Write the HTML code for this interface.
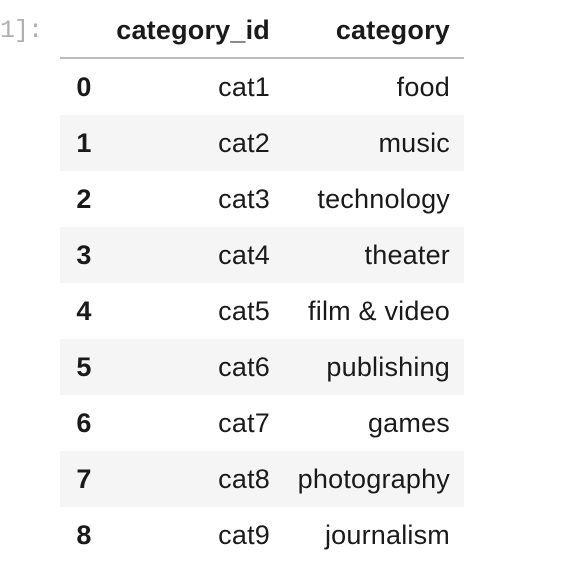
<!DOCTYPE html>
<html><head><style>
body{margin:0;width:574px;height:578px;background:#fff;position:relative;overflow:hidden;font-family:"Liberation Sans",sans-serif;color:#1a1a1a}
.p{position:absolute;left:0;top:16px;font-family:"Liberation Mono",monospace;font-size:25px;color:#b0b0b0;letter-spacing:-1px}
.hl{position:absolute;left:60px;top:57px;width:404px;height:2px;background:#bdbdbd}
.r{position:absolute;left:60px;width:404px;height:56px}
.g{background:#f5f5f5}
.t{position:absolute;font-size:27px;line-height:57px;white-space:nowrap;letter-spacing:0.2px}
.i{left:14px;font-weight:bold;width:20px;text-align:center}
.a{right:194px;text-align:right}
.b{right:14px;text-align:right}
.h{font-weight:bold}
</style></head><body>
<div class="p">1]:</div>
<div class="r" style="top:2px"><span class="t a h">category_id</span><span class="t b h">category</span></div>
<div class="hl"></div>
<div class="r" style="top:59px"><span class="t i">0</span><span class="t a">cat1</span><span class="t b">food</span></div>
<div class="r g" style="top:115px"><span class="t i">1</span><span class="t a">cat2</span><span class="t b">music</span></div>
<div class="r" style="top:171px"><span class="t i">2</span><span class="t a">cat3</span><span class="t b">technology</span></div>
<div class="r g" style="top:227px"><span class="t i">3</span><span class="t a">cat4</span><span class="t b">theater</span></div>
<div class="r" style="top:283px"><span class="t i">4</span><span class="t a">cat5</span><span class="t b">film &amp; video</span></div>
<div class="r g" style="top:339px"><span class="t i">5</span><span class="t a">cat6</span><span class="t b">publishing</span></div>
<div class="r" style="top:395px"><span class="t i">6</span><span class="t a">cat7</span><span class="t b">games</span></div>
<div class="r g" style="top:451px"><span class="t i">7</span><span class="t a">cat8</span><span class="t b">photography</span></div>
<div class="r" style="top:507px"><span class="t i">8</span><span class="t a">cat9</span><span class="t b">journalism</span></div>
</body></html>
